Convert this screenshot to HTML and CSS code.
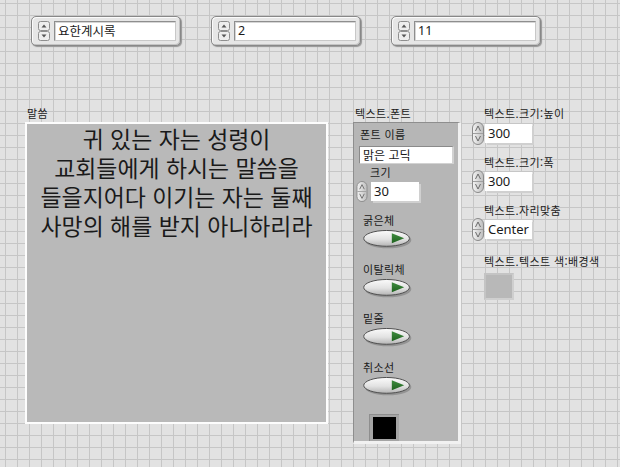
FILE: index.html
```html
<!DOCTYPE html>
<html lang="ko">
<head>
<meta charset="utf-8">
<link rel="stylesheet" href="styles.css">
</head>
<body>
<svg class="defs" width="0" height="0" aria-hidden="true">
  <defs>
    <linearGradient id="pillg" x1="0" y1="0" x2="1" y2="0">
      <stop offset="0" stop-color="#f4f4f4"/>
      <stop offset="1" stop-color="#bdbdbd"/>
    </linearGradient>
    <linearGradient id="btng" x1="0" y1="0" x2="0" y2="1">
      <stop offset="0" stop-color="#fbfbfb"/>
      <stop offset="0.55" stop-color="#e2e2e2"/>
      <stop offset="1" stop-color="#b4b4b4"/>
    </linearGradient>
    <linearGradient id="greeng" x1="0" y1="0" x2="0" y2="1">
      <stop offset="0" stop-color="#3f8c3f"/>
      <stop offset="1" stop-color="#1f621f"/>
    </linearGradient>
    <symbol id="spinrect" viewBox="0 0 12 20">
      <rect x="0.5" y="0.5" width="11" height="9" rx="2" fill="#ededed" stroke="#8e8e8e"/>
      <rect x="0.5" y="10.5" width="11" height="9" rx="2" fill="#ededed" stroke="#8e8e8e"/>
      <path d="M3.5 6.5 L6 3.5 L8.5 6.5Z" fill="#555"/>
      <path d="M3.5 13.5 L6 16.5 L8.5 13.5Z" fill="#555"/>
    </symbol>
    <symbol id="spinpill" viewBox="0 0 12 23">
      <rect x="0.5" y="0.5" width="11" height="22" rx="5.5" fill="url(#pillg)" stroke="#8a8a8a"/>
      <line x1="1" y1="11.5" x2="11" y2="11.5" stroke="#a0a0a0"/>
      <path d="M3.5 9 L6 4 L8.5 9" fill="none" stroke="#6a6a6a" stroke-width="1"/>
      <path d="M3.5 14 L6 19 L8.5 14" fill="none" stroke="#6a6a6a" stroke-width="1"/>
    </symbol>
    <symbol id="boolbtn" viewBox="0 0 52 20">
      <ellipse cx="26" cy="10.5" rx="24.5" ry="8.8" fill="#777" opacity="0.55"/>
      <ellipse cx="24.5" cy="8.8" rx="24" ry="8.3" fill="url(#btng)" stroke="#4a4a4a"/>
      <path d="M30 3.5 L43 8.8 L30 14Z" fill="url(#greeng)"/>
    </symbol>
  </defs>
</svg>

<div class="top-row">
  <div class="ctl">
    <svg class="spin-rect" width="12" height="20"><use href="#spinrect"/></svg>
    <div class="ctl-field">요한계시록</div>
  </div>
  <div class="ctl">
    <svg class="spin-rect" width="12" height="20"><use href="#spinrect"/></svg>
    <div class="ctl-field num">2</div>
  </div>
  <div class="ctl">
    <svg class="spin-rect" width="12" height="20"><use href="#spinrect"/></svg>
    <div class="ctl-field num">11</div>
  </div>
</div>

<div class="main">
  <div class="col-text">
    <div class="lbl lbl-msg">말씀</div>
    <div class="msgbox">귀 있는 자는 성령이<br>교회들에게 하시는 말씀을<br>들을지어다 이기는 자는 둘째<br>사망의 해를 받지 아니하리라</div>
  </div>

  <div class="col-font">
    <div class="lbl lbl-cluster">텍스트.폰트</div>
    <div class="cluster">
      <div class="lbl c-name">폰트 이름</div>
      <div class="c-field">맑은 고딕</div>
      <div class="lbl c-size">크기</div>
      <div class="numrow c-numrow">
        <svg class="spin-pill" width="12" height="21"><use href="#spinpill"/></svg>
        <div class="numfield small">30</div>
      </div>
      <div class="lbl c-bool first">굵은체</div>
      <svg class="bool" width="52" height="20"><use href="#boolbtn"/></svg>
      <div class="lbl c-bool">이탈릭체</div>
      <svg class="bool" width="52" height="20"><use href="#boolbtn"/></svg>
      <div class="lbl c-bool">밑줄</div>
      <svg class="bool" width="52" height="20"><use href="#boolbtn"/></svg>
      <div class="lbl c-bool">취소선</div>
      <svg class="bool" width="52" height="20"><use href="#boolbtn"/></svg>
      <div class="colorbox black"><div class="swatch"></div></div>
    </div>
  </div>

  <div class="col-right">
    <div class="lbl r-lbl first">텍스트.크기:높이</div>
    <div class="numrow">
      <svg class="spin-pill" width="12" height="23"><use href="#spinpill"/></svg>
      <div class="numfield">300</div>
    </div>
    <div class="lbl r-lbl">텍스트.크기:폭</div>
    <div class="numrow">
      <svg class="spin-pill" width="12" height="23"><use href="#spinpill"/></svg>
      <div class="numfield">300</div>
    </div>
    <div class="lbl r-lbl">텍스트.자리맞춤</div>
    <div class="numrow">
      <svg class="spin-pill" width="12" height="23"><use href="#spinpill"/></svg>
      <div class="numfield">Center</div>
    </div>
    <div class="lbl r-lbl last">텍스트.텍스트 색:배경색</div>
    <div class="graybox"></div>
  </div>
</div>
</body>
</html>
```
FILE: styles.css
```css
html, body {
  margin: 0;
  padding: 0;
}

body {
  width: 620px;
  height: 467px;
  overflow: hidden;
  background-color: #e2e2e2;
  background-image:
    linear-gradient(to right, #c6c6c6 1px, transparent 1px),
    linear-gradient(to bottom, #c6c6c6 1px, transparent 1px);
  background-size: 12px 12px;
  background-position: 5px 3px;
  font-family: "Noto Sans CJK KR", "Noto Sans", sans-serif;
  color: #1a1a1a;
}

.defs {
  position: absolute;
  width: 0;
  height: 0;
  overflow: hidden;
}

/* ---------- top row of ring controls ---------- */
.top-row {
  display: flex;
  gap: 30px;
  padding: 16px 0 0 31px;
}

.ctl {
  box-sizing: border-box;
  width: 150px;
  height: 30px;
  display: flex;
  align-items: center;
  gap: 4px;
  padding: 0 4px 0 6px;
  background: #e6e6e6;
  border: 1px solid #888;
  border-radius: 5px;
  box-shadow: inset 1px 1px 0 #fbfbfb, inset -1px -1px 0 #c4c4c4, 1px 1px 1px #969696;
}

.spin-rect {
  display: block;
  flex: none;
}

.ctl-field {
  box-sizing: border-box;
  width: 122px;
  height: 20px;
  background: #fff;
  border: 1px solid #8e8e8e;
  border-right-color: #c8c8c8;
  border-bottom-color: #c8c8c8;
  box-shadow: inset 1px 1px 0 #d6d6d6;
  padding-left: 3px;
  font-size: 12.5px;
  line-height: 18px;
  white-space: nowrap;
}

.ctl-field.num {
  font-family: "Noto Sans", "Liberation Sans", sans-serif;
  font-size: 12.5px;
}

/* ---------- main area ---------- */
.main {
  display: flex;
  align-items: flex-start;
  margin-top: 59px;
}

.lbl {
  font-size: 11px;
  letter-spacing: 0.4px;
  line-height: 17px;
  white-space: nowrap;
}

.col-text {
  margin-left: 25px;
}

.lbl-msg {
  padding-left: 2px;
}

.msgbox {
  box-sizing: border-box;
  width: 303px;
  height: 302px;
  border: 2px solid #fdfdfd;
  background: #b9b9b9;
  text-align: center;
  font-size: 22.9px;
  line-height: 29px;
  padding-top: 0;
  color: #1a1a1a;
  white-space: nowrap;
}

/* ---------- font cluster ---------- */
.col-font {
  margin-left: 25px;
}

.lbl-cluster {
  padding-left: 2px;
}

.cluster {
  box-sizing: border-box;
  width: 108px;
  height: 322px;
  background: #b6b6b6;
  border-left: 1px solid #8e8e8e;
  border-top: 1px solid #8e8e8e;
  border-right: 3px solid #f1f1f1;
  border-bottom: 3px solid #f1f1f1;
  padding-top: 3px;
  display: flex;
  flex-direction: column;
  align-items: flex-start;
}

.c-name {
  margin-left: 6px;
  line-height: 16px;
}

.c-field {
  box-sizing: border-box;
  margin: 4px 0 0 5px;
  width: 95px;
  height: 18px;
  background: #fff;
  border: 1px solid #8a8a8a;
  border-right: 2px solid #d2d2d2;
  border-bottom: 1px solid #d2d2d2;
  padding-left: 3px;
  font-size: 12px;
  line-height: 16px;
}

.c-size {
  margin-left: 16px;
  line-height: 16px;
}

.numrow {
  display: flex;
  align-items: center;
  gap: 1px;
}

.c-numrow {
  margin: 1px 0 0 2px;
  gap: 3px;
}

.spin-pill {
  display: block;
  flex: none;
}

.numfield {
  box-sizing: border-box;
  width: 47px;
  height: 19px;
  background: #fff;
  box-shadow: 2px 2px 0 #d0d0d0;
  padding-left: 3px;
  font-family: "Noto Sans", "Liberation Sans", sans-serif;
  font-size: 13px;
  line-height: 19px;
}

.numfield.small {
  width: 48px;
}

.c-bool {
  margin: 12px 0 0 9px;
  line-height: 16px;
}

.c-bool.first {
  margin-top: 10px;
}

.bool {
  display: block;
  margin: 2px 0 0 8px;
}

.colorbox {
  box-sizing: border-box;
  margin: 18px 0 0 15px;
  width: 30px;
  height: 28px;
  padding: 2px 3px;
  background: #a4a4a4;
  border-top: 1px solid #8e8e8e;
  border-left: 1px solid #8e8e8e;
}

.colorbox .swatch {
  width: 100%;
  height: 100%;
  background: #000;
}

/* ---------- right column ---------- */
.col-right {
  margin-left: 11px;
  display: flex;
  flex-direction: column;
  align-items: flex-start;
}

.r-lbl {
  margin-left: 12px;
  line-height: 16px;
  margin-top: 9px;
}

.r-lbl.first {
  margin-top: 0;
  line-height: 17px;
}

.r-lbl.last {
  margin-top: 12px;
}

.graybox {
  box-sizing: border-box;
  margin: 4px 0 0 12px;
  width: 30px;
  height: 27px;
  background: #b8b8b8;
  border: 2px solid #cfcfcf;
  border-top-color: #c4c4c4;
  border-left-color: #c4c4c4;
}
```
